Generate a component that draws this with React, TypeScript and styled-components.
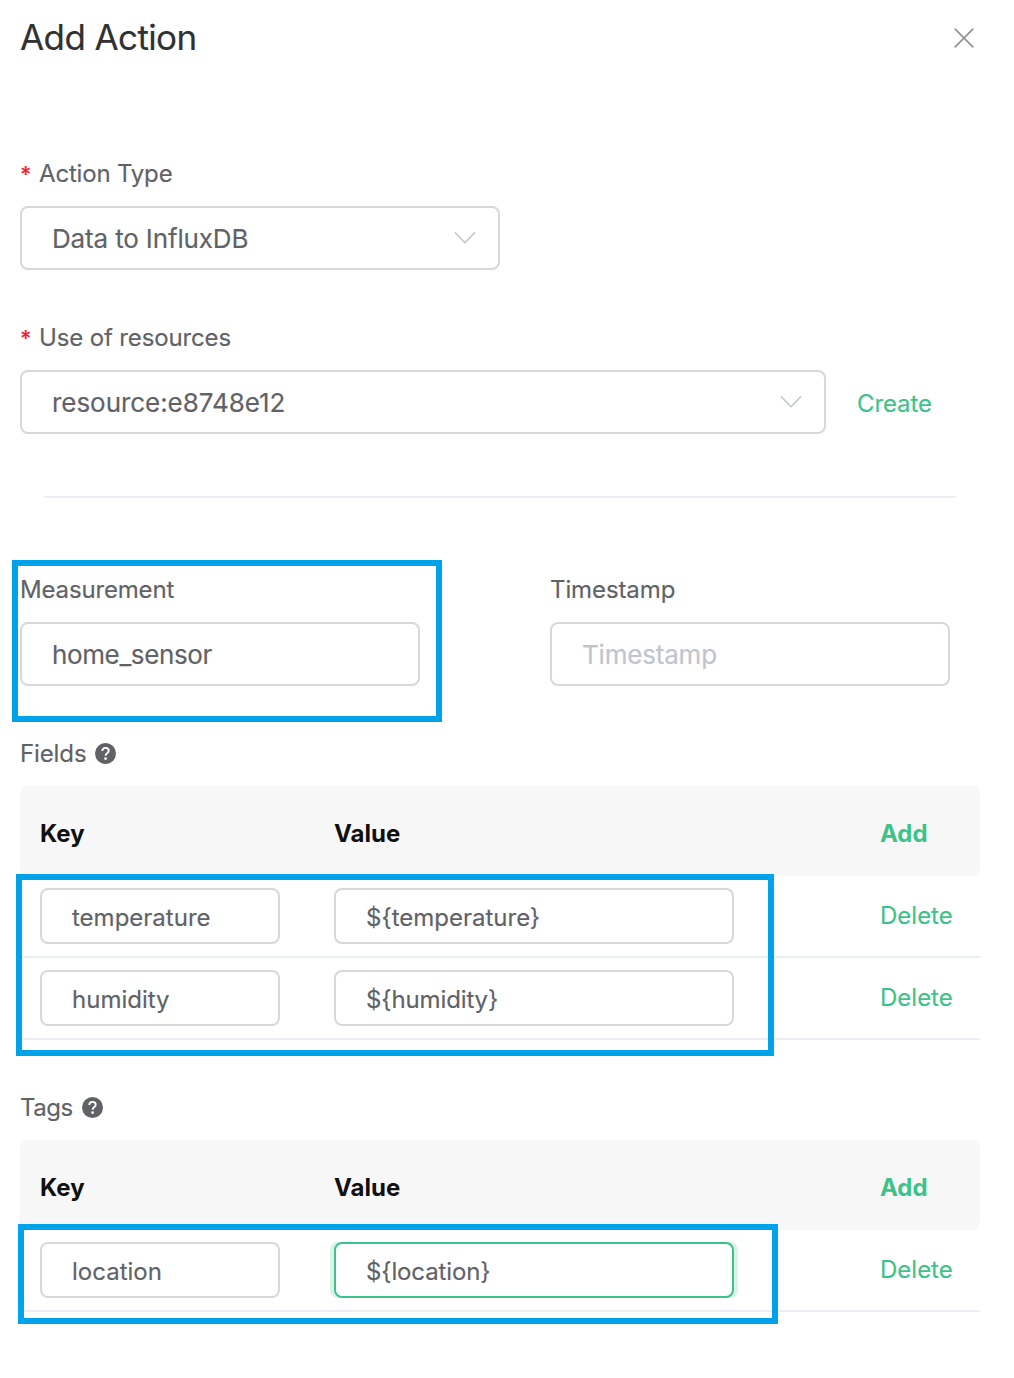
import React from 'react';
import styled, { createGlobalStyle } from 'styled-components';

const GlobalStyle = createGlobalStyle`
  * { box-sizing: border-box; }
  body {
    margin: 0;
    background: #fff;
    color: #606266;
    font-family: Inter, "Liberation Sans", sans-serif;
    font-size: 24px;
    -webkit-font-smoothing: antialiased;
    -webkit-text-stroke: 0.15px currentColor;
  }
`;

const Dialog = styled.main`
  width: 1014px;
  min-height: 1378px;
  padding: 0 34px 0 20px;
`;

const Header = styled.header`
  display: flex;
  align-items: center;
  justify-content: space-between;
  height: 76px;
  padding-right: 6px;
`;

const Title = styled.h1`
  margin: 0;
  padding-bottom: 2px;
  color: #303133;
  font-size: 35px;
  font-weight: 400;
  line-height: 44px;
  letter-spacing: -0.6px;
`;

const CloseButton = styled.button`
  display: flex;
  width: 20px;
  height: 20px;
  margin: 0;
  padding: 0;
  border: 0;
  background: none;
`;

const Form = styled.form`
  display: flex;
  flex-direction: column;
  gap: 48px;
  padding-top: 78px;
`;

const Item = styled.div<{ $width?: number }>`
  position: relative;
  display: flex;
  flex-direction: column;
  gap: 12px;
  width: ${(p) => (p.$width ? `${p.$width}px` : 'auto')};
`;

const Label = styled.label<{ $tracking?: number }>`
  display: flex;
  align-items: center;
  height: 40px;
  line-height: 40px;
  white-space: nowrap;
  letter-spacing: ${(p) => p.$tracking ?? 0}px;
`;

const Required = styled.span`
  width: 19px;
  color: #f5222d;
  font-size: 22px;
  font-weight: 500;
  letter-spacing: 0;
`;

const HelpIcon = styled.svg`
  width: 21px;
  height: 21px;
  margin: -2px 0 0 9px;
`;

const Control = styled.div`
  display: flex;
  align-items: center;
  gap: 31px;
`;

const Select = styled.div<{ $width: number; $tracking?: number }>`
  display: flex;
  align-items: center;
  justify-content: space-between;
  width: ${(p) => p.$width}px;
  height: 64px;
  padding: 0 22px 0 30px;
  border: 2px solid #d8d8d8;
  border-radius: 8px;
  font-size: 26px;
  letter-spacing: ${(p) => p.$tracking ?? 0}px;
`;

const SelectText = styled.span`
  padding-top: 1px;
`;

const Input = styled.input<{ $width: number; $small?: boolean; $active?: boolean; $tracking?: number }>`
  display: block;
  width: ${(p) => p.$width}px;
  height: ${(p) => (p.$small ? 56 : 64)}px;
  padding: ${(p) => (p.$small ? 2 : 0)}px 30px 0;
  border: 2px solid ${(p) => (p.$active ? '#3dc38a' : '#d8d8d8')};
  border-radius: 8px;
  outline: none;
  background: #fff;
  color: #606266;
  font-family: inherit;
  font-size: ${(p) => (p.$small ? 24 : 26)}px;
  letter-spacing: ${(p) => p.$tracking ?? 0}px;
  box-shadow: ${(p) => (p.$active ? '-4px 0 0 #d8f3e8, 4px 0 0 #d8f3e8' : 'none')};

  &::placeholder {
    color: #c0c4cc;
    opacity: 1;
  }
`;

const Link = styled.a`
  color: #3dc38a;
`;

const CreateLink = styled(Link)`
  padding-top: 2px;
  letter-spacing: -0.1px;
`;

const DeleteLink = styled(Link)`
  padding-bottom: 2px;
`;

const Divider = styled.hr`
  width: 912px;
  height: 2px;
  margin: 14px 0 24px 24px;
  border: 0;
  background: #ebeef5;
`;

const Columns = styled.div`
  display: flex;
  gap: 130px;
`;

const Highlight = styled.div<{ $inset: string }>`
  position: absolute;
  inset: ${(p) => p.$inset};
  border: 6px solid #00a2e9;
  pointer-events: none;
`;

const Table = styled.div`
  width: 960px;
`;

const Row = styled.div`
  display: grid;
  grid-template-columns: 294px 546px 1fr;
  align-items: center;
  height: 82px;
  padding-left: 20px;
  border-bottom: 2px solid #ebeef5;
`;

const HeadRow = styled(Row)`
  height: 90px;
  padding-top: 4px;
  border-bottom: 0;
  border-radius: 8px;
  background: #f7f7f7;
  color: #101010;
  font-weight: 700;
  -webkit-text-stroke: 0;
`;

const Body = styled.div`
  position: relative;
`;

const Chevron = () => (
  <svg width="22" height="14" viewBox="0 0 22 14" fill="none" stroke="#c0c4cc" strokeWidth="1.5" strokeLinecap="round" strokeLinejoin="round">
    <path d="M1.3 1.7 11 11.8 20.7 1.7" />
  </svg>
);

const Help = () => (
  <HelpIcon viewBox="0 0 21 21" fill="none">
    <circle cx="10.5" cy="10.5" r="10.5" fill="#606266" />
    <path d="M7.3 8c.1-2 1.3-3.1 3.2-3.1s3.2 1.1 3.2 2.8c0 1.2-.6 1.8-1.6 2.5-.9.6-1.4 1-1.4 2v.6" stroke="#fff" strokeWidth="1.9" />
    <circle cx="10.6" cy="15.6" r="1.4" fill="#fff" />
  </HelpIcon>
);

type Entry = { name: string; value: string; active?: boolean; tracking?: number };

const fields: Entry[] = [
  { name: 'temperature', value: '${temperature}' },
  { name: 'humidity', value: '${humidity}', tracking: -0.12 },
];

const tags: Entry[] = [{ name: 'location', value: '${location}', active: true, tracking: -0.12 }];

const PairTable = ({ entries, highlight }: { entries: Entry[]; highlight: string }) => (
  <Table>
    <HeadRow>
      <span>Key</span>
      <span>Value</span>
      <Link>Add</Link>
    </HeadRow>
    <Body>
      {entries.map((e) => (
        <Row key={e.name}>
          <Input $width={240} $small defaultValue={e.name} />
          <Input $width={400} $small $active={e.active} $tracking={e.tracking} defaultValue={e.value} />
          <DeleteLink>Delete</DeleteLink>
        </Row>
      ))}
      <Highlight $inset={highlight} />
    </Body>
  </Table>
);

export default function App() {
  return (
    <>
      <GlobalStyle />
      <Dialog>
        <Header>
          <Title>Add Action</Title>
          <CloseButton aria-label="Close">
            <svg width="20" height="20" viewBox="0 0 20 20" fill="none" stroke="#909399" strokeWidth="1.7" strokeLinecap="round">
              <path d="M1.2 1.2l17.6 17.6M18.8 1.2L1.2 18.8" />
            </svg>
          </CloseButton>
        </Header>
        <Form>
          <Item>
            <Label $tracking={-0.18}><Required>*</Required>Action Type</Label>
            <Select $width={480} $tracking={-0.15}><SelectText>Data to InfluxDB</SelectText><Chevron /></Select>
          </Item>
          <Item>
            <Label $tracking={-0.14}><Required>*</Required>Use of resources</Label>
            <Control>
              <Select $width={806} $tracking={-0.05}><SelectText>resource:e8748e12</SelectText><Chevron /></Select>
              <CreateLink>Create</CreateLink>
            </Control>
          </Item>
          <Divider />
          <Columns>
            <Item $width={400}>
              <Label $tracking={-0.16}>Measurement</Label>
              <Input $width={400} $tracking={-0.38} defaultValue="home_sensor" />
              <Highlight $inset="-10px -22px -36px -8px" />
            </Item>
            <Item $width={400}>
              <Label $tracking={-0.1}>Timestamp</Label>
              <Input $width={400} $tracking={-0.2} placeholder="Timestamp" />
            </Item>
          </Columns>
          <Item>
            <Label $tracking={-0.12}>Fields<Help /></Label>
            <PairTable entries={fields} highlight="-2px 206px -16px -4px" />
          </Item>
          <Item>
            <Label $tracking={-0.5}>Tags<Help /></Label>
            <PairTable entries={tags} highlight="-6px 202px -12px -2px" />
          </Item>
        </Form>
      </Dialog>
    </>
  );
}
